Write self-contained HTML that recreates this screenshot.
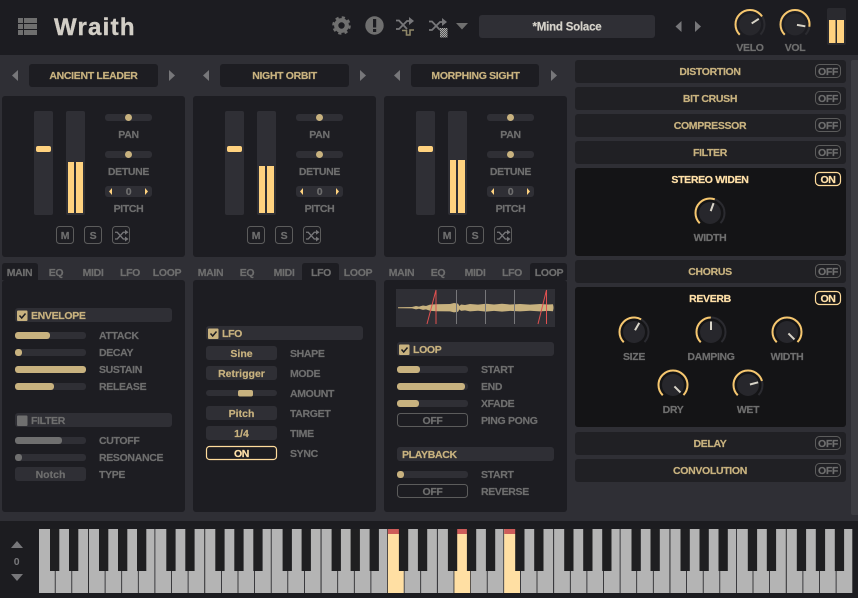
<!DOCTYPE html>
<html><head><meta charset="utf-8"><title>Wraith</title>
<style>
html,body{margin:0;padding:0;background:#2f2f35;width:858px;height:598px;overflow:hidden}
svg{display:block;position:absolute;left:0;top:0}
text{font-family:"Liberation Sans",sans-serif;font-weight:700;font-size:10.5px;letter-spacing:-.33px;stroke-width:.2px}
.g{fill:#6e6e6e;stroke:#6e6e6e}
.c{text-anchor:middle}
.y{fill:#c8b27f;stroke:#c8b27f}
.b{fill:#ffe0a8;stroke:#ffe0a8}
.n{letter-spacing:.02px}
.d{fill:#1d1d22}
.t{fill:#2f2f35}
.f{fill:#c8b27f}
.h{fill:#6f6f6f}
.a{fill:#77777a}
.p{fill:none;stroke:#5c5c5c;stroke-width:1}
.on{fill:none;stroke:#ffdc9c;stroke-width:1.2}
.fx{fill:#202024}
.ex{fill:#141416}
.m{fill:#ffd27f}
.ka{fill:none;stroke:#f6c76f;stroke-width:2}
.kb{fill:none;stroke:#2b2b30;stroke-width:2}
.kd{fill:#27272c}
.kp{stroke:#d8d4c8;stroke-width:2}
</style></head>
<body>
<svg width="858" height="598" viewBox="0 0 858 598" xmlns="http://www.w3.org/2000/svg">
<defs>
<pattern id="chk" width="2" height="2" patternUnits="userSpaceOnUse"><rect width="2" height="2" fill="#555"/><rect width="1" height="1" fill="#aaa"/><rect x="1" y="1" width="1" height="1" fill="#aaa"/></pattern>
<g id="kn"><circle r="14.5" class="kb" pathLength="360" stroke-dasharray="270 360" transform="rotate(135)"/><circle r="11" class="kd"/></g>
<g id="oct">
<rect x="0" width="15.8" height="64" fill="#b4b4b4"/><rect x="16.6" width="15.8" height="64" fill="#b4b4b4"/><rect x="33.2" width="15.8" height="64" fill="#b4b4b4"/><rect x="49.9" width="15.8" height="64" fill="#b4b4b4"/><rect x="66.5" width="15.8" height="64" fill="#b4b4b4"/><rect x="83.1" width="15.8" height="64" fill="#b4b4b4"/><rect x="99.7" width="15.8" height="64" fill="#b4b4b4"/>
</g>
<g id="blk">
<rect x="11" width="9.3" height="42" fill="#1f1f21"/><rect x="30" width="9.3" height="42" fill="#1f1f21"/><rect x="60" width="9.3" height="42" fill="#1f1f21"/><rect x="79" width="9.3" height="42" fill="#1f1f21"/><rect x="98" width="9.3" height="42" fill="#1f1f21"/>
</g>
<g id="shuf" fill="none" stroke-width="1.8"><path d="M0 3h3l8 9h3M0 12h3l8-9h3"/></g>
<g id="bshuf"><g transform="translate(115,230) scale(.75)" stroke="#77777a"><use href="#shuf"/></g><polygon points="125,229.700 128.500,232.200 125,234.700" class="a"/><polygon points="125,236.500 128.500,239 125,241.500" class="a"/></g>
</defs>

<rect width="858" height="598" fill="#2f2f35"/>
<!-- header -->
<rect width="858" height="55" fill="#1c1c21"/>
<g class="h">
<rect x="18" y="18" width="5" height="5"/><rect x="24" y="18" width="13" height="5"/>
<rect x="18" y="24" width="5" height="5"/><rect x="24" y="24" width="13" height="5"/>
<rect x="18" y="30" width="5" height="5"/><rect x="24" y="30" width="13" height="5"/>
</g>
<text x="54" y="35" style="font-size:24px;letter-spacing:1.25px;stroke:#d2cec6;stroke-width:.4px" fill="#d2cec6">Wraith</text>
<!-- gear -->
<circle cx="341.500" cy="25.500" r="5.300" fill="none" stroke="#6f6f6f" stroke-width="4.200"/>
<circle cx="341.500" cy="25.500" r="8.100" fill="none" stroke="#6f6f6f" stroke-width="2.400" stroke-dasharray="3.2 3.16"/>
<!-- alert -->
<circle cx="374.500" cy="25.500" r="9.200" fill="#6f6f6f"/>
<rect x="373" y="19" width="3.200" height="8.500" fill="#1c1c21"/><rect x="373" y="29" width="3.200" height="3" fill="#1c1c21"/>
<!-- shuffle 1 -->
<path d="M396 20.500h3l8 8.500M396 29h3l8-8h3" fill="none" stroke="#77777a" stroke-width="1.800"/>
<polygon points="409,17 414,21 409,25" fill="#77777a"/>
<path d="M402 30.500h4.500v4.500h3.500v-5h4" fill="none" stroke="#8f8768" stroke-width="1.600"/>
<!-- shuffle 2 -->
<path d="M429 21.500h3l8 8.500M429 30h3l8-8h3" fill="none" stroke="#77777a" stroke-width="1.800"/>
<polygon points="442,18 447,22 442,26" fill="#77777a"/>
<rect x="440" y="28" width="7.500" height="9.500" fill="url(#chk)"/>
<polygon points="456,23 468,23 462,29.500" fill="#6f6f6f"/>
<rect x="479" y="15" width="176" height="23" rx="3" fill="#2f2f35"/>
<text x="567" y="30.500" class="c" style="font-size:11.500px;letter-spacing:-.22px;stroke:#d5d2ca" fill="#d5d2ca">*Mind Solace</text>
<polygon points="681.500,21 675.500,26.500 681.500,32" class="a"/><polygon points="695,21 701,26.500 695,32" class="a"/>
<!-- knobs top -->
<g transform="translate(750,24.500)"><use href="#kn"/><circle r="14.500" class="ka" pathLength="360" stroke-dasharray="192 360" transform="rotate(135)"/><line y1="-2" y2="-10.500" class="kp" transform="rotate(57)"/></g>
<g transform="translate(795,24.500)"><use href="#kn"/><circle r="14.500" class="ka" pathLength="360" stroke-dasharray="235 360" transform="rotate(135)"/><line y1="-2" y2="-10.500" class="kp" transform="rotate(100)"/></g>
<text x="750" y="51" class="g c">VELO</text><text x="795" y="51" class="g c">VOL</text>
<rect x="827" y="8" width="19" height="37" rx="2" fill="#2a2a2f"/>
<rect x="829" y="20" width="6.500" height="23" class="m"/><rect x="837" y="20" width="7" height="23" class="m"/>

<!-- scrollbar -->
<rect x="851" y="60" width="8" height="455" rx="2" fill="#3d3d42"/>

<!-- column 1 -->
<g>
<polygon points="18,70 12,75.500 18,81" class="a"/><polygon points="169,70 175,75.500 169,81" class="a"/>
<rect x="29" y="64" width="129" height="23" rx="3" class="d"/>
<text x="93.500" y="79" class="y c">ANCIENT LEADER</text>
<rect x="2" y="96" width="183" height="161" rx="3" class="d"/>
<rect x="34" y="111" width="19" height="104" rx="2" class="t"/><rect x="36" y="146" width="15" height="6" rx="2" class="m"/>
<rect x="66" y="111" width="19" height="104" rx="2" class="t"/><rect x="68" y="162" width="6" height="51" class="m"/><rect x="76" y="162" width="7" height="51" class="m"/>
<rect x="105" y="114" width="47" height="7" rx="3" class="t"/><circle cx="128.500" cy="117.500" r="3.500" class="f"/>
<text x="128.500" y="138" class="g c">PAN</text>
<rect x="105" y="151" width="47" height="7" rx="3" class="t"/><circle cx="128.500" cy="154.500" r="3.500" class="f"/>
<text x="128.500" y="175" class="g c">DETUNE</text>
<rect x="105" y="186" width="47" height="11" rx="3" class="t"/><text x="128.500" y="195" class="g c">0</text>
<polygon points="112,188 109,191.500 112,195" class="m"/><polygon points="145,188 148,191.500 145,195" class="m"/>
<text x="128.500" y="212" class="g c">PITCH</text>
<rect x="56.500" y="226.500" width="17" height="17" rx="3" class="p"/><text x="65" y="239" class="g c">M</text>
<rect x="84.500" y="226.500" width="17" height="17" rx="3" class="p"/><text x="93" y="239" class="g c">S</text>
<rect x="112.500" y="226.500" width="17" height="17" rx="3" class="p"/><use href="#bshuf"/>
<!-- tabs -->
<path d="M2 280v-14q0-3 3-3h30q3 0 3 3v14z" class="d"/>
<text x="19.500" y="276" class="g c">MAIN</text><text x="56" y="276" class="g c">EQ</text><text x="93" y="276" class="g c">MIDI</text><text x="130" y="276" class="g c">LFO</text><text x="167" y="276" class="g c">LOOP</text>
<rect x="2" y="280" width="183" height="232" rx="3" class="d"/>
<rect x="15" y="308" width="157" height="14" rx="3" class="t"/>
<rect x="17" y="310.500" width="10.500" height="10.500" rx="1" class="f"/><path d="M19.500 315.500l2.200 2.500 3.800-4.500" fill="none" stroke="#1d1d22" stroke-width="1.500"/>
<text x="31" y="319" class="y">ENVELOPE</text>
<rect x="15" y="332" width="71" height="7" rx="3" class="t"/><rect x="15" y="332" width="35" height="7" rx="3" class="f"/><text x="99" y="339" class="g">ATTACK</text>
<rect x="15" y="349" width="71" height="7" rx="3" class="t"/><rect x="15" y="349" width="7" height="7" rx="3" class="f"/><text x="99" y="356" class="g">DECAY</text>
<rect x="15" y="366" width="71" height="7" rx="3" class="f"/><text x="99" y="373" class="g">SUSTAIN</text>
<rect x="15" y="383" width="71" height="7" rx="3" class="t"/><rect x="15" y="383" width="39" height="7" rx="3" class="f"/><text x="99" y="390" class="g">RELEASE</text>
<rect x="15" y="413" width="157" height="14" rx="3" class="t"/>
<rect x="17" y="415.500" width="10.500" height="10.500" rx="1" class="h"/><text x="31" y="424" class="g">FILTER</text>
<rect x="15" y="437" width="71" height="7" rx="3" class="t"/><rect x="15" y="437" width="47" height="7" rx="3" class="h"/><text x="99" y="444" class="g">CUTOFF</text>
<rect x="15" y="454" width="71" height="7" rx="3" class="t"/><rect x="15" y="454" width="7" height="7" rx="3" class="h"/><text x="99" y="461" class="g">RESONANCE</text>
<rect x="15" y="467" width="71" height="14" rx="3" class="t"/><text x="50.500" y="478" class="g c n">Notch</text><text x="99" y="478" class="g">TYPE</text>
</g>

<!-- column 2 -->
<g transform="translate(191,0)">
<polygon points="18,70 12,75.500 18,81" class="a"/><polygon points="169,70 175,75.500 169,81" class="a"/>
<rect x="29" y="64" width="129" height="23" rx="3" class="d"/>
<text x="93.500" y="79" class="y c">NIGHT ORBIT</text>
<rect x="2" y="96" width="183" height="161" rx="3" class="d"/>
<rect x="34" y="111" width="19" height="104" rx="2" class="t"/><rect x="36" y="146" width="15" height="6" rx="2" class="m"/>
<rect x="66" y="111" width="19" height="104" rx="2" class="t"/><rect x="68" y="166" width="6" height="47" class="m"/><rect x="76" y="166" width="7" height="47" class="m"/>
<rect x="105" y="114" width="47" height="7" rx="3" class="t"/><circle cx="128.500" cy="117.500" r="3.500" class="f"/>
<text x="128.500" y="138" class="g c">PAN</text>
<rect x="105" y="151" width="47" height="7" rx="3" class="t"/><circle cx="128.500" cy="154.500" r="3.500" class="f"/>
<text x="128.500" y="175" class="g c">DETUNE</text>
<rect x="105" y="186" width="47" height="11" rx="3" class="t"/><text x="128.500" y="195" class="g c">0</text>
<polygon points="112,188 109,191.500 112,195" class="m"/><polygon points="145,188 148,191.500 145,195" class="m"/>
<text x="128.500" y="212" class="g c">PITCH</text>
<rect x="56.500" y="226.500" width="17" height="17" rx="3" class="p"/><text x="65" y="239" class="g c">M</text>
<rect x="84.500" y="226.500" width="17" height="17" rx="3" class="p"/><text x="93" y="239" class="g c">S</text>
<rect x="112.500" y="226.500" width="17" height="17" rx="3" class="p"/><use href="#bshuf"/>
<path d="M111 280v-14q0-3 3-3h31q3 0 3 3v14z" class="d"/>
<text x="19.500" y="276" class="g c">MAIN</text><text x="56" y="276" class="g c">EQ</text><text x="93" y="276" class="g c">MIDI</text><text x="130" y="276" class="g c">LFO</text><text x="167" y="276" class="g c">LOOP</text>
<rect x="2" y="280" width="183" height="232" rx="3" class="d"/>
<rect x="15" y="326" width="157" height="14" rx="3" class="t"/>
<rect x="17" y="328.500" width="10.500" height="10.500" rx="1" class="f"/><path d="M19.500 333.500l2.200 2.500 3.800-4.500" fill="none" stroke="#1d1d22" stroke-width="1.500"/>
<text x="31" y="337" class="y">LFO</text>
<rect x="15" y="346" width="71" height="14" rx="3" class="t"/><text x="50.500" y="357" class="y c n">Sine</text><text x="99" y="357" class="g">SHAPE</text>
<rect x="15" y="366" width="71" height="14" rx="3" class="t"/><text x="50.500" y="377" class="y c n">Retrigger</text><text x="99" y="377" class="g">MODE</text>
<rect x="15" y="390" width="71" height="6" rx="3" class="t"/><rect x="47" y="390" width="15" height="6.500" rx="2" class="f"/><text x="99" y="397" class="g">AMOUNT</text>
<rect x="15" y="406" width="71" height="14" rx="3" class="t"/><text x="50.500" y="417" class="y c n">Pitch</text><text x="99" y="417" class="g">TARGET</text>
<rect x="15" y="426" width="71" height="14" rx="3" class="t"/><text x="50.500" y="437" class="y c n">1/4</text><text x="99" y="437" class="g">TIME</text>
<rect x="15.500" y="446.500" width="70" height="13" rx="3" class="on"/><text x="50.500" y="457" class="b c">ON</text><text x="99" y="457" class="g">SYNC</text>
</g>

<!-- column 3 -->
<g transform="translate(382,0)">
<polygon points="18,70 12,75.500 18,81" class="a"/><polygon points="169,70 175,75.500 169,81" class="a"/>
<rect x="29" y="64" width="128" height="23" rx="3" class="d"/>
<text x="93.500" y="79" class="y c">MORPHING SIGHT</text>
<rect x="2" y="96" width="183" height="161" rx="3" class="d"/>
<rect x="34" y="111" width="19" height="104" rx="2" class="t"/><rect x="36" y="146" width="15" height="6" rx="2" class="m"/>
<rect x="66" y="111" width="19" height="104" rx="2" class="t"/><rect x="68" y="160" width="6" height="53" class="m"/><rect x="76" y="160" width="7" height="53" class="m"/>
<rect x="105" y="114" width="47" height="7" rx="3" class="t"/><circle cx="128.500" cy="117.500" r="3.500" class="f"/>
<text x="128.500" y="138" class="g c">PAN</text>
<rect x="105" y="151" width="47" height="7" rx="3" class="t"/><circle cx="128.500" cy="154.500" r="3.500" class="f"/>
<text x="128.500" y="175" class="g c">DETUNE</text>
<rect x="105" y="186" width="47" height="11" rx="3" class="t"/><text x="128.500" y="195" class="g c">0</text>
<polygon points="112,188 109,191.500 112,195" class="m"/><polygon points="145,188 148,191.500 145,195" class="m"/>
<text x="128.500" y="212" class="g c">PITCH</text>
<rect x="56.500" y="226.500" width="17" height="17" rx="3" class="p"/><text x="65" y="239" class="g c">M</text>
<rect x="84.500" y="226.500" width="17" height="17" rx="3" class="p"/><text x="93" y="239" class="g c">S</text>
<rect x="112.500" y="226.500" width="17" height="17" rx="3" class="p"/><use href="#bshuf"/>
<path d="M148 280v-14q0-3 3-3h31q3 0 3 3v14z" class="d"/>
<text x="19.500" y="276" class="g c">MAIN</text><text x="56" y="276" class="g c">EQ</text><text x="93" y="276" class="g c">MIDI</text><text x="130" y="276" class="g c">LFO</text><text x="167" y="276" class="g c">LOOP</text>
<rect x="2" y="280" width="183" height="232" rx="3" class="d"/>
<rect x="15" y="342" width="157" height="14" rx="3" class="t"/>
<rect x="17" y="344.500" width="10.500" height="10.500" rx="1" class="f"/><path d="M19.500 349.500l2.200 2.500 3.800-4.500" fill="none" stroke="#1d1d22" stroke-width="1.500"/>
<text x="31" y="353" class="y">LOOP</text>
<rect x="15" y="366" width="71" height="7" rx="3" class="t"/><rect x="15" y="366" width="23" height="7" rx="3" class="f"/><text x="99" y="373" class="g">START</text>
<rect x="15" y="383" width="71" height="7" rx="3" class="t"/><rect x="15" y="383" width="68" height="7" rx="3" class="f"/><text x="99" y="390" class="g">END</text>
<rect x="15" y="400" width="71" height="7" rx="3" class="t"/><rect x="15" y="400" width="22" height="7" rx="3" class="f"/><text x="99" y="407" class="g">XFADE</text>
<rect x="15.500" y="413.500" width="70" height="13" rx="3" class="p"/><text x="50.500" y="424" class="g c">OFF</text><text x="99" y="424" class="g">PING PONG</text>
<rect x="15" y="447" width="157" height="14" rx="3" class="t"/><text x="20" y="458" class="y">PLAYBACK</text>
<rect x="15" y="471" width="71" height="7" rx="3" class="t"/><rect x="15" y="471" width="7" height="7" rx="3" class="f"/><text x="99" y="478" class="g">START</text>
<rect x="15.500" y="484.500" width="70" height="13" rx="3" class="p"/><text x="50.500" y="495" class="g c">OFF</text><text x="99" y="495" class="g">REVERSE</text>
</g>
<!-- waveform -->
<rect x="396" y="289" width="159" height="38" class="t"/>
<polygon fill="#c8b27f" points="398,307.200 412,307 416,306 419,306.600 423,305.500 426,306 430,304.600 436,304.200 450,304 454,303 458,303.600 459.500,306 461,304.500 465,305 470,304 478,304.600 486,303.800 494,304.500 502,303.800 510,304.500 520,304 530,304.600 540,304 548,304.500 553,304.200 553.500,307 553.500,308.400 553,311.200 548,310.900 540,311.400 530,310.800 520,311.400 510,310.900 502,311.600 494,310.900 486,311.600 478,310.800 470,311.400 465,310.400 461,310.900 459.500,309.400 458,311.800 454,312.400 450,311.400 436,311.200 430,310.800 426,309.400 423,309.900 419,308.800 416,309.400 412,308.400 398,308.200"/>
<g stroke="#77777a" stroke-width="1"><line x1="456.500" y1="290" x2="456.500" y2="324"/><line x1="485.500" y1="290" x2="485.500" y2="324"/><line x1="514.500" y1="290" x2="514.500" y2="324"/></g>
<g stroke="#e05050" stroke-width="1" fill="none"><path d="M427 324L436 290V324"/><path d="M538 324L546.500 290V324"/></g>

<!-- FX -->
<rect x="575" y="60" width="271" height="23" rx="3" class="fx"/><text x="710" y="75" class="y c">DISTORTION</text><rect x="815.500" y="64.500" width="25" height="13" rx="4" class="p"/><text x="828" y="75" class="g c">OFF</text>
<rect x="575" y="87" width="271" height="23" rx="3" class="fx"/><text x="710" y="102" class="y c">BIT CRUSH</text><rect x="815.500" y="91.500" width="25" height="13" rx="4" class="p"/><text x="828" y="102" class="g c">OFF</text>
<rect x="575" y="114" width="271" height="23" rx="3" class="fx"/><text x="710" y="129" class="y c">COMPRESSOR</text><rect x="815.500" y="118.500" width="25" height="13" rx="4" class="p"/><text x="828" y="129" class="g c">OFF</text>
<rect x="575" y="141" width="271" height="23" rx="3" class="fx"/><text x="710" y="156" class="y c">FILTER</text><rect x="815.500" y="145.500" width="25" height="13" rx="4" class="p"/><text x="828" y="156" class="g c">OFF</text>
<rect x="575" y="168" width="271" height="88" rx="3" class="ex"/><text x="710" y="183" class="b c">STEREO WIDEN</text><rect x="815.500" y="172.500" width="25" height="13" rx="4" class="on"/><text x="828" y="183" class="b c">ON</text>
<g transform="translate(710,213)"><use href="#kn"/><circle r="14.500" class="ka" pathLength="360" stroke-dasharray="155 360" transform="rotate(135)"/><line y1="-2" y2="-10.500" class="kp" transform="rotate(20)"/></g>
<text x="710" y="241" class="g c">WIDTH</text>
<rect x="575" y="260" width="271" height="23" rx="3" class="fx"/><text x="710" y="275" class="y c">CHORUS</text><rect x="815.500" y="264.500" width="25" height="13" rx="4" class="p"/><text x="828" y="275" class="g c">OFF</text>
<rect x="575" y="287" width="271" height="140" rx="3" class="ex"/><text x="710" y="302" class="b c">REVERB</text><rect x="815.500" y="291.500" width="25" height="13" rx="4" class="on"/><text x="828" y="302" class="b c">ON</text>
<g transform="translate(634,332)"><use href="#kn"/><circle r="14.500" class="ka" pathLength="360" stroke-dasharray="165 360" transform="rotate(135)"/><line y1="-2" y2="-10.500" class="kp" transform="rotate(30)"/></g>
<g transform="translate(711,332)"><use href="#kn"/><circle r="14.500" class="ka" pathLength="360" stroke-dasharray="135 360" transform="rotate(135)"/><line y1="-2" y2="-10.500" class="kp"/></g>
<g transform="translate(787,332)"><use href="#kn"/><circle r="14.500" class="ka" pathLength="360" stroke-dasharray="270 360" transform="rotate(135)"/><line y1="-2" y2="-10.500" class="kp" transform="rotate(135)"/></g>
<g transform="translate(673,385)"><use href="#kn"/><circle r="14.500" class="ka" pathLength="360" stroke-dasharray="270 360" transform="rotate(135)"/><line y1="-2" y2="-10.500" class="kp" transform="rotate(135)"/></g>
<g transform="translate(748,385)"><use href="#kn"/><circle r="14.500" class="ka" pathLength="360" stroke-dasharray="210 360" transform="rotate(135)"/><line y1="-2" y2="-10.500" class="kp" transform="rotate(75)"/></g>
<text x="634" y="360" class="g c">SIZE</text><text x="711" y="360" class="g c">DAMPING</text><text x="787" y="360" class="g c">WIDTH</text><text x="673" y="413" class="g c">DRY</text><text x="748" y="413" class="g c">WET</text>
<rect x="575" y="432" width="271" height="23" rx="3" class="fx"/><text x="710" y="447" class="y c">DELAY</text><rect x="815.500" y="436.500" width="25" height="13" rx="4" class="p"/><text x="828" y="447" class="g c">OFF</text>
<rect x="575" y="459" width="271" height="23" rx="3" class="fx"/><text x="710" y="474" class="y c">CONVOLUTION</text><rect x="815.500" y="463.500" width="25" height="13" rx="4" class="p"/><text x="828" y="474" class="g c">OFF</text>

<!-- keyboard -->
<rect y="521" width="858" height="77" fill="#1c1c20"/>
<polygon points="17,541 11,548 23,548" fill="#77777a"/>
<text x="16.500" y="565" class="c" fill="#77777a">0</text>
<polygon points="11,574 23,574 17,581" fill="#77777a"/>
<g transform="translate(39,529)">
<use href="#oct"/><use href="#oct" x="116.300"/><use href="#oct" x="232.600"/><use href="#oct" x="348.900"/><use href="#oct" x="465.200"/><use href="#oct" x="581.500"/><use href="#oct" x="697.800"/>
<rect x="348.900" width="15.800" height="64" fill="#ffdfa3"/><rect x="348.900" width="15.800" height="5" fill="#cd5c5a"/>
<rect x="415.400" width="15.800" height="64" fill="#ffdfa3"/><rect x="415.400" width="15.800" height="5" fill="#cd5c5a"/>
<rect x="465.200" width="15.800" height="64" fill="#ffdfa3"/><rect x="465.200" width="15.800" height="5" fill="#cd5c5a"/>
<use href="#blk"/><use href="#blk" x="116.300"/><use href="#blk" x="232.600"/><use href="#blk" x="348.900"/><use href="#blk" x="465.200"/><use href="#blk" x="581.500"/><use href="#blk" x="697.800"/>
</g>
</svg>
</body></html>
